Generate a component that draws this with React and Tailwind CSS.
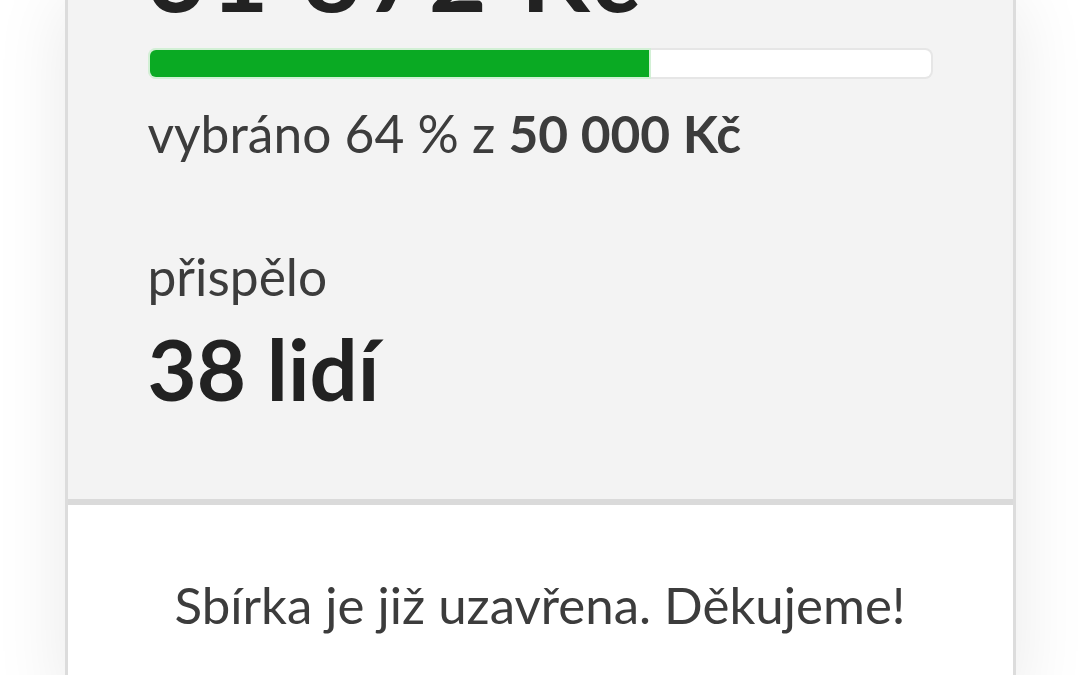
import React from 'react';

const raised = 31872;
const goal = 50000;
const donors = 38;

const App = () => {
  const percent = Math.round((raised / goal) * 100);

  return (
    <div className="h-[675px] overflow-hidden bg-white flex justify-center font-['Lato','Noto_Sans',sans-serif]">
      <div className="w-[951px] h-fit border-x-[3px] border-[#dcdcdc] shadow-[0_0_70px_rgba(0,0,0,0.09)]">
        {/* souhrn sbírky */}
        <div className="bg-[#f3f3f3] px-[80px] pb-[88px] border-b-[6px] border-[#dadada]">
          <div className="mt-[-77px] text-[100px] leading-none font-bold tracking-[5px] text-[#222]">31 872 Kč</div>

          <div className="relative mt-[25px] h-[31px] rounded-[8px] bg-[#e6e6e6] p-[2px]">
            <div className="h-full rounded-[6px] bg-white">
              <div
                className="h-full rounded-l-[6px] bg-[#0aaa23] shadow-[0_0_0_2px_#d2f0d5]"
                style={{ width: `${percent}%` }}
              />
            </div>
          </div>

          <p className="mt-[29px] text-[51.5px] leading-none text-[#3c3c3c]">
            vybráno {percent} % z <span className="font-bold">50 000 Kč</span>
          </p>

          <p className="mt-[91px] text-[51.5px] leading-none text-[#3c3c3c]">přispělo</p>
          <div className="mt-[24px] text-[85px] leading-none font-bold text-[#222]">{donors} lidí</div>
        </div>

        {/* stav */}
        <div className="bg-white pt-[74px] pb-[80px] text-center">
          <p className="text-[51px] leading-none text-[#3c3c3c]">Sbírka je již uzavřena. Děkujeme!</p>
        </div>
      </div>
    </div>
  );
};

export default App;
